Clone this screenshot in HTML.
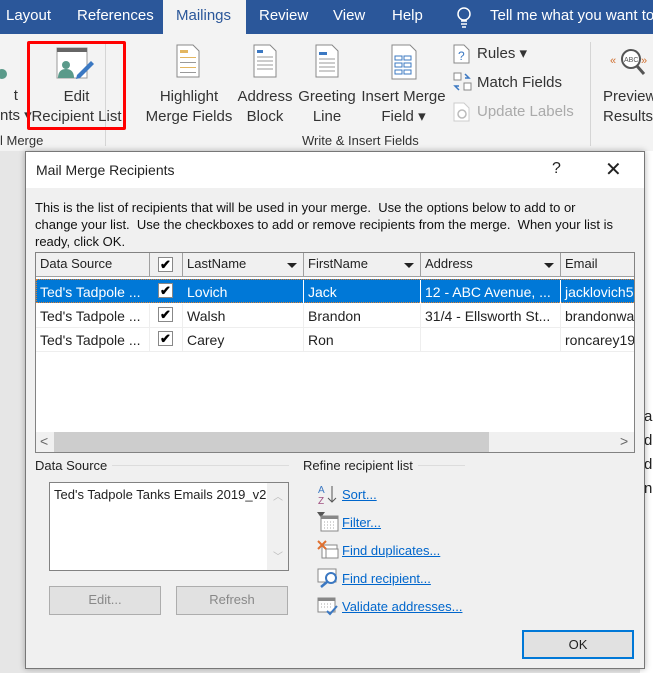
<!DOCTYPE html>
<html><head><meta charset="utf-8"><style>
*{margin:0;padding:0;box-sizing:border-box}
body{width:653px;height:673px;overflow:hidden;position:relative;font-family:"Liberation Sans",sans-serif;font-size:14px;color:#222;background:#e6e6e6}
.a{position:absolute;white-space:nowrap}
.tab{color:#fff;font-size:15px;top:7px}
.rb{font-size:15px;color:#333;text-align:center;line-height:20px}
.dlg{font-size:13px}
.th{top:253px;height:24px;background:#f0f0f0;border-right:1px solid #a0a0a0;border-bottom:1px solid #a0a0a0;padding:3px 4px;font-size:13px}
.cell{height:24px;padding:4px 4px;font-size:14px;border-right:1px solid #eee;border-bottom:1px solid #eee}
.cb{width:15px;height:15px;border:1px solid #888;background:#fff;position:absolute;font-size:13px;line-height:13px;text-align:center;font-weight:bold;color:#000}
.arr{position:absolute;right:6px;top:10px;width:0;height:0;border-left:5px solid transparent;border-right:5px solid transparent;border-top:5px solid #222}
.lnk{color:#0066cc;text-decoration:underline;font-size:13px;left:342px}
.btn{background:#e1e1e1;border:1px solid #adadad;text-align:center;font-size:13px;line-height:26px}
</style></head><body>
<!-- tab bar -->
<div class="a" style="left:0;top:0;width:653px;height:34px;background:#2b579a"></div>
<div class="a" style="left:163px;top:0;width:83px;height:35px;background:#f3f3f3"></div>
<div class="a tab" style="left:6px">Layout</div>
<div class="a tab" style="left:77px">References</div>
<div class="a tab" style="left:176px;color:#2b579a">Mailings</div>
<div class="a tab" style="left:259px">Review</div>
<div class="a tab" style="left:333px">View</div>
<div class="a tab" style="left:392px">Help</div>
<svg class="a" style="left:456px;top:6px" width="16" height="22"><circle cx="8" cy="8" r="6" fill="none" stroke="#fff" stroke-width="1.5"/><path d="M5 15h6M5 18h6M6 21h4" stroke="#fff" stroke-width="1.5"/></svg>
<div class="a tab" style="left:490px">Tell me what you want to</div>
<!-- ribbon -->
<div class="a" style="left:0;top:34px;width:653px;height:117px;background:#f3f3f3"></div>
<div class="a" style="left:105px;top:42px;width:1px;height:104px;background:#d5d5d5"></div>
<div class="a" style="left:590px;top:42px;width:1px;height:104px;background:#d5d5d5"></div>
<svg class="a" style="left:0;top:48px" width="10" height="36"><circle cx="2" cy="26" r="5" fill="#5a9a8a"/></svg>
<div class="a rb" style="left:0;top:86px">t<br>nts ▾</div>
<div class="a rb" style="left:0;top:131px;font-size:13px">l Merge</div>
<div class="a" style="left:27px;top:41px;width:99px;height:89px;border:3px solid #f00;border-radius:2px"></div>
<svg class="a" style="left:55px;top:47px" width="42" height="34"><rect x="2" y="1" width="30" height="30" fill="#fff" stroke="#999"/><rect x="2" y="1" width="30" height="4" fill="#666"/><circle cx="11" cy="18" r="4" fill="#5a9a8a"/><path d="M3 31c0-7 4-9 8-9s8 2 8 9z" fill="#5a9a8a"/><path d="M22 28l14-14 3 3-14 14-4 1z" fill="#3b78c2"/></svg>
<div class="a rb" style="left:27px;top:87px;width:99px">Edit<br>Recipient List</div>
<svg class="a" style="left:176px;top:44px" width="24" height="34"><path d="M1 1h16l6 6v26H1z" fill="#fff" stroke="#888"/><rect x="4" y="6" width="8" height="3" fill="#e3b660"/><rect x="4" y="13" width="16" height="1" fill="#e3b660"/><rect x="4" y="18" width="16" height="1" fill="#999"/><rect x="4" y="23" width="16" height="1" fill="#e3b660"/><rect x="4" y="28" width="16" height="1" fill="#999"/></svg>
<div class="a rb" style="left:145px;top:87px;width:88px">Highlight<br>Merge Fields</div>
<svg class="a" style="left:253px;top:44px" width="24" height="34"><path d="M1 1h16l6 6v26H1z" fill="#fff" stroke="#888"/><rect x="4" y="6" width="6" height="3" fill="#3b78c2"/><path d="M4 13h16M4 17h16M4 21h16M4 25h16" stroke="#999"/></svg>
<div class="a rb" style="left:237px;top:87px;width:56px">Address<br>Block</div>
<svg class="a" style="left:315px;top:44px" width="24" height="34"><path d="M1 1h16l6 6v26H1z" fill="#fff" stroke="#888"/><rect x="4" y="8" width="8" height="3" fill="#3b78c2"/><path d="M4 15h16M4 19h16M4 23h16M4 27h16" stroke="#999"/></svg>
<div class="a rb" style="left:297px;top:87px;width:60px">Greeting<br>Line</div>
<svg class="a" style="left:391px;top:44px" width="26" height="36"><path d="M1 1h18l6 6v28H1z" fill="#fff" stroke="#888"/><g fill="none" stroke="#3b78c2"><rect x="4" y="12" width="7" height="4"/><rect x="13" y="12" width="7" height="4"/><rect x="4" y="19" width="7" height="4"/><rect x="13" y="19" width="7" height="4"/><rect x="4" y="26" width="7" height="4"/><rect x="13" y="26" width="7" height="4"/></g></svg>
<div class="a rb" style="left:360px;top:87px;width:87px">Insert Merge<br>Field ▾</div>
<div class="a rb" style="left:302px;top:131px;font-size:13px">Write &amp; Insert Fields</div>
<svg class="a" style="left:453px;top:44px" width="18" height="20"><path d="M1 1h10l5 5v13H1z" fill="#fff" stroke="#888"/><text x="5" y="16" font-size="12" fill="#3b78c2" font-family="Liberation Sans">?</text></svg>
<div class="a rb" style="left:477px;top:44px">Rules ▾</div>
<svg class="a" style="left:453px;top:72px" width="20" height="20"><rect x="1" y="1" width="7" height="7" fill="#fff" stroke="#888"/><rect x="11" y="11" width="7" height="7" fill="#fff" stroke="#888"/><path d="M12 2l4 4-4 0M6 18l-4-4 4 0" stroke="#3b78c2" fill="none" stroke-width="1.5"/></svg>
<div class="a rb" style="left:477px;top:73px">Match Fields</div>
<svg class="a" style="left:453px;top:102px" width="18" height="20"><path d="M1 1h10l5 5v13H1z" fill="#fff" stroke="#ccc"/><circle cx="9" cy="12" r="4" fill="none" stroke="#bbb" stroke-width="1.5"/></svg>
<div class="a rb" style="left:477px;top:102px;color:#aaa">Update Labels</div>
<svg class="a" style="left:610px;top:46px" width="40" height="32"><text x="0" y="18" font-size="11" fill="#d07030" font-family="Liberation Sans">«</text><circle cx="21" cy="13" r="9" fill="#fff" stroke="#555" stroke-width="2"/><text x="14" y="16" font-size="7" fill="#555" font-family="Liberation Sans">ABC</text><path d="M27 20l7 8" stroke="#555" stroke-width="3"/><text x="31" y="18" font-size="11" fill="#d07030" font-family="Liberation Sans">»</text></svg>
<div class="a rb" style="left:603px;top:87px;text-align:left">Preview<br>Results</div>
<!-- doc area -->
<div class="a" style="left:0;top:151px;width:653px;height:522px;background:#e6e6e6"></div>
<div class="a" style="left:640px;top:151px;width:13px;height:522px;background:#fff"></div>
<div class="a" style="left:644px;top:405px;font-size:15px;line-height:24px">a<br>d<br>d<br>ni</div>
<!-- dialog -->
<div class="a" style="left:25px;top:151px;width:620px;height:518px;background:#f0f0f0;border:1px solid #777;box-shadow:0 0 6px rgba(0,0,0,.3)"></div>
<div class="a" style="left:26px;top:152px;width:618px;height:36px;background:#fff"></div>
<div class="a dlg" style="left:36px;top:162px;font-size:14px">Mail Merge Recipients</div>
<div class="a" style="left:552px;top:160px;font-size:16px">?</div>
<div class="a" style="left:605px;top:157px;font-size:20px;font-weight:300">✕</div>
<div class="a dlg" style="left:35px;top:199px;line-height:17px;color:#111">This is the list of recipients that will be used in your merge.&nbsp; Use the options below to add to or<br>change your list.&nbsp; Use the checkboxes to add or remove recipients from the merge.&nbsp; When your list is<br>ready, click OK.</div>
<!-- table -->
<div class="a" style="left:35px;top:252px;width:600px;height:201px;background:#fff;border:1px solid #828282;overflow:hidden">
 <div class="a th" style="left:0;top:0;width:114px">Data Source</div>
 <div class="a th" style="left:114px;top:0;width:33px"><div class="cb" style="left:8px;top:4px">✔</div></div>
 <div class="a th" style="left:147px;top:0;width:121px">LastName<span class="arr"></span></div>
 <div class="a th" style="left:268px;top:0;width:117px">FirstName<span class="arr"></span></div>
 <div class="a th" style="left:385px;top:0;width:140px">Address<span class="arr"></span></div>
 <div class="a th" style="left:525px;top:0;width:80px">Email</div>
 <div class="a" style="left:0;top:26px;width:600px;height:24px;background:#0078d7;border:1px dotted #e08030"></div>
 <div class="a cell" style="left:0;top:27px;width:114px;color:#fff;border:0">Ted's Tadpole ...</div>
 <div class="a cell" style="left:114px;top:27px;width:33px;border:0"><div class="cb" style="left:8px;top:3px">✔</div></div>
 <div class="a cell" style="left:147px;top:27px;width:121px;color:#fff;border-right:1px solid #fff;border-bottom:0">Lovich</div>
 <div class="a cell" style="left:268px;top:27px;width:117px;color:#fff;border-right:1px solid #fff;border-bottom:0">Jack</div>
 <div class="a cell" style="left:385px;top:27px;width:140px;color:#fff;border-right:1px solid #fff;border-bottom:0">12 - ABC Avenue, ...</div>
 <div class="a cell" style="left:525px;top:27px;width:80px;color:#fff;border:0">jacklovich5</div>
 <div class="a cell" style="left:0;top:51px;width:114px">Ted's Tadpole ...</div>
 <div class="a cell" style="left:114px;top:51px;width:33px"><div class="cb" style="left:8px;top:3px">✔</div></div>
 <div class="a cell" style="left:147px;top:51px;width:121px">Walsh</div>
 <div class="a cell" style="left:268px;top:51px;width:117px">Brandon</div>
 <div class="a cell" style="left:385px;top:51px;width:140px">31/4 - Ellsworth St...</div>
 <div class="a cell" style="left:525px;top:51px;width:80px">brandonwa</div>
 <div class="a cell" style="left:0;top:75px;width:114px">Ted's Tadpole ...</div>
 <div class="a cell" style="left:114px;top:75px;width:33px"><div class="cb" style="left:8px;top:3px">✔</div></div>
 <div class="a cell" style="left:147px;top:75px;width:121px">Carey</div>
 <div class="a cell" style="left:268px;top:75px;width:117px">Ron</div>
 <div class="a cell" style="left:385px;top:75px;width:140px"></div>
 <div class="a cell" style="left:525px;top:75px;width:80px">roncarey19</div>
 <div class="a" style="left:0;top:179px;width:600px;height:20px;background:#f0f0f0"></div>
 <div class="a" style="left:18px;top:179px;width:435px;height:20px;background:#cdcdcd"></div>
 <div class="a" style="left:4px;top:180px;font-size:14px;color:#666">&lt;</div>
 <div class="a" style="left:584px;top:180px;font-size:14px;color:#666">&gt;</div>
</div>
<!-- data source group -->
<div class="a dlg" style="left:35px;top:458px">Data Source</div>
<div class="a" style="left:112px;top:465px;width:177px;height:1px;background:#dcdcdc"></div>
<div class="a" style="left:49px;top:482px;width:240px;height:89px;background:#fff;border:1px solid #828282"></div>
<div class="a" style="left:267px;top:483px;width:21px;height:87px;background:#f0f0f0"></div>
<div class="a" style="left:273px;top:488px;font-size:10px;color:#bbb">︿</div>
<div class="a" style="left:273px;top:548px;font-size:10px;color:#bbb">﹀</div>
<div class="a dlg" style="left:54px;top:487px">Ted's Tadpole Tanks Emails 2019_v2</div>
<div class="a btn" style="left:49px;top:586px;width:112px;height:29px;color:#888">Edit...</div>
<div class="a btn" style="left:176px;top:586px;width:112px;height:29px;color:#888">Refresh</div>
<!-- refine -->
<div class="a dlg" style="left:303px;top:458px">Refine recipient list</div>
<div class="a" style="left:418px;top:465px;width:47px;height:1px;background:#dcdcdc"></div>
<svg class="a" style="left:318px;top:483px" width="20" height="22"><text x="0" y="10" font-size="10" fill="#3b78c2" font-family="Liberation Sans">A</text><text x="0" y="21" font-size="10" fill="#a05080" font-family="Liberation Sans">Z</text><path d="M14 3v16M10 15l4 4 4-4" stroke="#555" fill="none"/></svg>
<div class="a lnk" style="top:487px">Sort...</div>
<svg class="a" style="left:317px;top:512px" width="22" height="20"><path d="M0 0h8L5 4v3z" fill="#555"/><rect x="4" y="4" width="17" height="15" fill="#fff" stroke="#888"/><rect x="4" y="4" width="17" height="3" fill="#888"/><path d="M7 10h12M7 13h12M7 16h12" stroke="#aaa" stroke-dasharray="1 2"/></svg>
<div class="a lnk" style="top:515px">Filter...</div>
<svg class="a" style="left:317px;top:540px" width="22" height="20"><rect x="5" y="5" width="15" height="13" fill="#fff" stroke="#888"/><rect x="9" y="9" width="12" height="9" fill="#fff" stroke="#888"/><path d="M1 1l8 8M9 1L1 9" stroke="#e07030" stroke-width="2"/></svg>
<div class="a lnk" style="top:543px">Find duplicates...</div>
<svg class="a" style="left:317px;top:568px" width="22" height="20"><rect x="1" y="1" width="18" height="13" fill="#fff" stroke="#888"/><circle cx="14" cy="10" r="5" fill="#fff" stroke="#3b78c2" stroke-width="2"/><path d="M10 14l-6 5" stroke="#3b78c2" stroke-width="2.5"/></svg>
<div class="a lnk" style="top:571px">Find recipient...</div>
<svg class="a" style="left:317px;top:596px" width="22" height="20"><rect x="1" y="2" width="17" height="14" fill="#fff" stroke="#888"/><rect x="1" y="2" width="17" height="3" fill="#888"/><path d="M4 8h12M4 11h12" stroke="#aaa" stroke-dasharray="1 2"/><path d="M10 15l3 3 7-8" stroke="#3b78c2" stroke-width="2" fill="none"/></svg>
<div class="a lnk" style="top:599px">Validate addresses...</div>
<div class="a btn" style="left:522px;top:630px;width:112px;height:29px;border:2px solid #0078d7;line-height:25px">OK</div>
</body></html>
